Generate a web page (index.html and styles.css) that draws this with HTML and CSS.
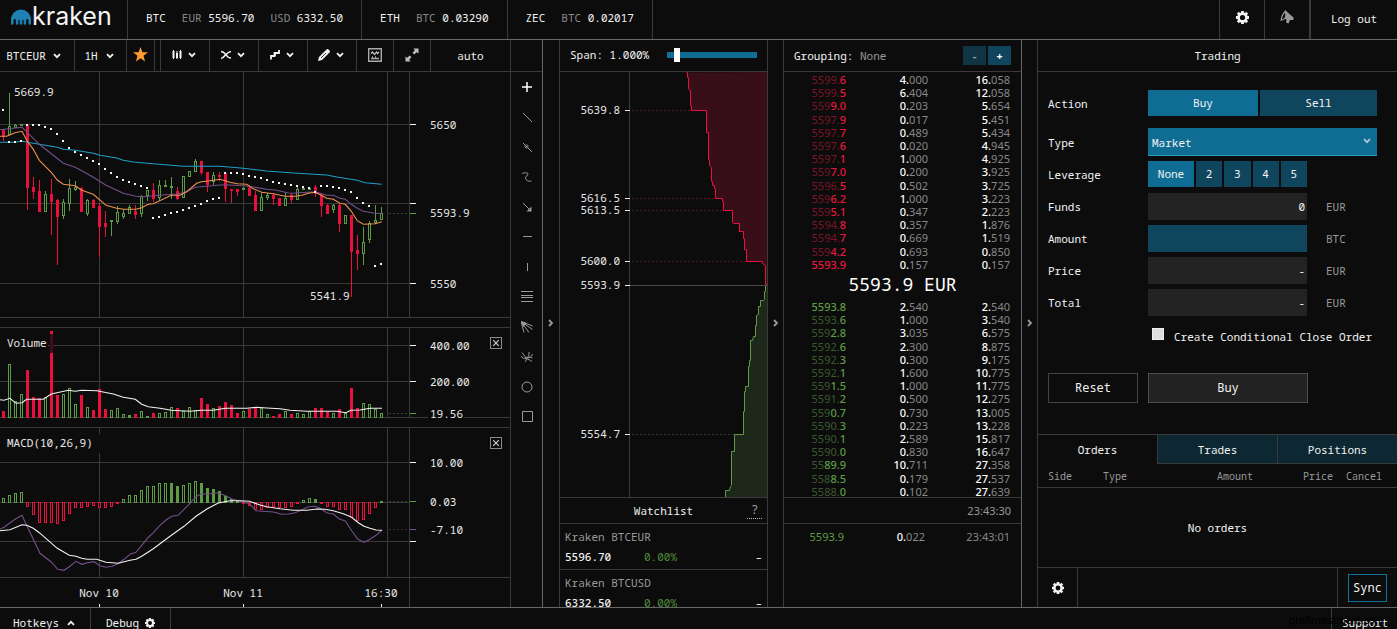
FILE: index.html
```
<!DOCTYPE html>
<html lang="en">
<head>
<meta charset="utf-8">
<title>Kraken Trading</title>
<link rel="stylesheet" href="styles.css">
</head>
<body>
<svg class="defs" aria-hidden="true">
  <symbol id="chev" viewBox="0 0 8 6"><path d="M1 1.2L4 4.2L7 1.2" fill="none" stroke="currentColor" stroke-width="1.8"/></symbol>
  <symbol id="gear" viewBox="0 0 12 12"><circle cx="6" cy="6" r="3.6" fill="none" stroke="currentColor" stroke-width="2.4"/><path d="M6 0v2M6 10v2M0 6h2M10 6h2M1.7 1.7l1.5 1.5M8.8 8.8l1.5 1.5M1.7 10.3l1.5-1.5M8.8 3.2l1.5-1.5" stroke="currentColor" stroke-width="2.6"/></symbol>
</svg>

<header class="topbar">
  <a class="logo" href="#" aria-label="kraken">
    <svg width="20" height="16" viewBox="0 0 20 16"><path d="M0 10.500A10 10 0 0 1 20 10.500V14.500a1.300 1.300 0 0 1-2.600 0V11a1.100 1.100 0 0 0-2.200 0v3.500a1.300 1.300 0 0 1-2.600 0V11a1 1 0 0 0-1.300 0v3.500a1.300 1.300 0 0 1-2.600 0V11a1 1 0 0 0-1.300 0v3.500a1.300 1.300 0 0 1-2.600 0V11a1.100 1.100 0 0 0-2.200 0v3.500a1.300 1.300 0 0 1-2.600 0z" fill="#1f80b4"/></svg>
    <span class="logo-word">kraken</span>
  </a>
  <div class="ticker"><b>BTC</b><span><i>EUR</i> 5596.70</span><span><i>USD</i> 6332.50</span></div>
  <div class="ticker"><b>ETH</b><span><i>BTC</i> 0.03290</span></div>
  <div class="ticker"><b>ZEC</b><span><i>BTC</i> 0.02017</span></div>
  <div class="grow"></div>
  <button class="top-btn" aria-label="Settings"><svg width="13" height="13"><use href="#gear"/></svg></button>
  <button class="top-btn dim" aria-label="Announcements"><svg width="14" height="14" viewBox="0 0 14 14"><path d="M5.500 0.500L13.500 7.500V10H10L8.500 13.500 6 12.500 6.500 9.500 5 9z" fill="currentColor"/><path d="M5.300 1.200C3 3.500 1.500 7 1.200 10.200 3.500 10 5.800 8 6 5z" fill="#0c0c0c" stroke="currentColor" stroke-width="1.300"/></svg></button>
  <a class="logout" href="#">Log out</a>
</header>

<main class="main">
  <section class="chart-col">
    <div class="bar toolbar">
      <button class="tb w-pair">BTCEUR <svg class="chev"><use href="#chev"/></svg></button>
      <button class="tb w-int">1H <svg class="chev"><use href="#chev"/></svg></button>
      <button class="tb w-star" aria-label="Favourite"><svg width="15" height="15" viewBox="0 0 15 15"><path d="M7.500 0l1.900 5.300H15l-4.500 3.500L12.100 14.500 7.500 11.200 2.900 14.500 4.500 8.800 0 5.300h5.600z" fill="#ff9d2e"/></svg></button>
      <div class="tb-gap"></div>
      <button class="tb w-tool" aria-label="Chart type"><svg width="10" height="10" viewBox="0 0 10 10"><path d="M1.500 0v9M5 1v8M8.500 0v9" stroke="currentColor" stroke-width="1"/><path d="M.5 1h2v7h-2zM4 3h2v5h-2zM7.500 1h2v7h-2z" fill="currentColor"/></svg><svg class="chev"><use href="#chev"/></svg></button>
      <button class="tb w-tool" aria-label="Overlays"><svg width="10" height="10" viewBox="0 0 10 10"><path d="M0 1.500C5 1.500 4.500 8 10 8M0 8.500C4 7.500 5 2 10 1.500" fill="none" stroke="currentColor" stroke-width="1.600"/></svg><svg class="chev"><use href="#chev"/></svg></button>
      <button class="tb w-tool" aria-label="Indicators"><svg width="10" height="10" viewBox="0 0 10 10"><path d="M1 9.500V6H4.500V3H9V0M5 6V3" fill="none" stroke="currentColor" stroke-width="1.800"/></svg><svg class="chev"><use href="#chev"/></svg></button>
      <button class="tb w-tool" aria-label="Draw"><svg width="12" height="12" viewBox="0 0 12 12"><path d="M0 12l1-4L8.500.5a1.400 1.400 0 0 1 2 0l1 1a1.400 1.400 0 0 1 0 2L4 11z" fill="currentColor"/><path d="M3 9l5-5" stroke="#0c0c0c" stroke-width=".8"/></svg><svg class="chev"><use href="#chev"/></svg></button>
      <button class="tb w-icon" aria-label="Snapshot"><svg width="14" height="14" viewBox="0 0 14 14"><path d="M.7.700h12.600v12.600H.7z" fill="none" stroke="#aaa" stroke-width="1.400"/><path d="M3 5.500l1.500-1.500 2 2.500 2-2.500 1 1.500 1.500-1.500" fill="none" stroke="#ccc" stroke-width="1.200"/><path d="M3 10.500h8M4 9h1M7 9h1" stroke="#aaa" stroke-width="1.300"/></svg></button>
      <button class="tb w-icon" aria-label="Fullscreen"><svg width="14" height="14" viewBox="0 0 14 14"><path d="M8.500 0.500H13.500v5L11.600 4.200 9.300 6.500 7.500 4.700l2.300-2.300zM5.500 13.500H.5V8.500l1.700 1.200L4.700 7.500 6.500 9.300 4.200 11.600z" fill="#bbb"/></svg></button>
      <button class="tb w-auto">auto</button>
    </div>
    <div class="chart-wrap">
      <svg id="chart" viewBox="0 72 510 535" preserveAspectRatio="xMinYMin meet" role="img" aria-label="BTCEUR price, volume and MACD"></svg>
      <button class="close close-vol" aria-label="Close Volume"><svg width="6" height="6" viewBox="0 0 6 6"><path d="M0 0l6 6M6 0L0 6" stroke="#ccc" stroke-width="1.200"/></svg></button>
      <button class="close close-macd" aria-label="Close MACD"><svg width="6" height="6" viewBox="0 0 6 6"><path d="M0 0l6 6M6 0L0 6" stroke="#ccc" stroke-width="1.200"/></svg></button>
    </div>
  </section>

  <aside class="tools-col">
    <div class="bar"></div>
    <div class="tools">
      <button class="on" aria-label="Crosshair"><svg viewBox="0 0 12 12"><path d="M6 1v10M1 6h10" stroke-width="1.500"/></svg></button>
      <button aria-label="Line"><svg viewBox="0 0 12 12"><path d="M2 2l9 9"/></svg></button>
      <button aria-label="Extended line"><svg viewBox="0 0 12 12"><path d="M2 2l9 9"/><circle cx="5.500" cy="5.500" r="1.500"/></svg></button>
      <button aria-label="Polyline"><svg viewBox="0 0 12 12"><path d="M1 2.500c2-1 6-1 6 .5S4 5.500 4.500 7.500 8 11 10.500 10"/></svg></button>
      <button aria-label="Arrow"><svg viewBox="0 0 12 12"><path d="M2 2l8 8"/><path d="M10.500 5.500v5h-5z" fill="#999" stroke="none"/></svg></button>
      <button aria-label="Horizontal line"><svg viewBox="0 0 12 12"><path d="M2 5.500h9"/></svg></button>
      <button aria-label="Vertical line"><svg viewBox="0 0 12 12"><path d="M6.500 2v8"/></svg></button>
      <button aria-label="Fibonacci levels"><svg viewBox="0 0 12 12"><path d="M0 .5h12M0 4.500h12M0 6.500h12M0 10.500h12"/></svg></button>
      <button aria-label="Fan"><svg viewBox="0 0 12 12"><path d="M0 .5l11.500 4.500M0 .5l11.500 8M0 .5l8 11M0 .5l3 11"/><path d="M0 0l6 2-4 4z" fill="#999" stroke="none"/></svg></button>
      <button aria-label="Arcs"><svg viewBox="0 0 12 12"><path d="M1 1.500l4 5.500M0 5c1 2 3 3 5 2 3-1 3-3 3-6M4 11c1-1 1.500-2.500 1-4M5 7c3 0 6-1 6.500-4M5 7c2-1 4-1 6.500 0M5 8c2 0 4 1 6 2.500"/></svg></button>
      <button aria-label="Circle"><svg viewBox="0 0 12 12"><circle cx="6" cy="6" r="5"/></svg></button>
      <button aria-label="Rectangle"><svg viewBox="0 0 12 12"><path d="M1.500.5h10v10h-10z"/></svg></button>
    </div>
  </aside>

  <button class="fold" aria-label="Collapse chart"><svg width="6" height="8" viewBox="0 0 6 8"><path d="M1 1l3 3-3 3" fill="none" stroke="#999" stroke-width="1.800"/></svg></button>

  <section class="depth-col">
    <div class="bar span-bar">
      <label for="span">Span: 1.000%</label>
      <input id="span" type="range" min="0" max="100" value="8">
    </div>
    <svg id="depth" viewBox="560 72 207 425" preserveAspectRatio="xMaxYMin meet" role="img" aria-label="Market depth"></svg>
    <div class="watch">
      <div class="watch-head"><h2>Watchlist</h2><abbr title="Watchlist help">?</abbr></div>
      <div class="watch-item"><p>Kraken BTCEUR</p><div class="watch-vals"><b>5596.70</b><em>0.00%</em><span>–</span></div></div>
      <div class="watch-item"><p>Kraken BTCUSD</p><div class="watch-vals"><b>6332.50</b><em>0.00%</em><span>–</span></div></div>
    </div>
  </section>

  <button class="fold" aria-label="Collapse depth"><svg width="6" height="8" viewBox="0 0 6 8"><path d="M1 1l3 3-3 3" fill="none" stroke="#999" stroke-width="1.800"/></svg></button>

  <section class="book-col">
    <div class="bar book-bar"><span>Grouping: <i>None</i></span><div class="grow"></div><button class="step off" aria-label="Less">-</button><button class="step" aria-label="More">+</button></div>
    <div class="book">
      <table class="asks"><tbody id="asks"></tbody></table>
      <div class="last">5593.9 EUR</div>
      <table class="bids"><tbody id="bids"></tbody></table>
    </div>
    <div class="clock">23:43:30</div>
    <table class="trades"><tbody><tr><td class="up">5593.9</td><td><b>0.</b>022</td><td>23:43:01</td></tr></tbody></table>
  </section>

  <button class="fold" aria-label="Collapse book"><svg width="6" height="8" viewBox="0 0 6 8"><path d="M1 1l3 3-3 3" fill="none" stroke="#999" stroke-width="1.800"/></svg></button>

  <section class="trade-col">
    <div class="bar title-bar"><h2>Trading</h2></div>
    <form class="form" onsubmit="return false">
      <div class="row row-action"><span class="lbl">Action</span><div class="seg"><button type="button" class="sel buy">Buy</button><button type="button" class="sell">Sell</button></div></div>
      <div class="row row-type"><label class="lbl" for="type">Type</label><div class="pick"><select id="type"><option>Market</option></select><svg class="chev"><use href="#chev"/></svg></div></div>
      <div class="row"><span class="lbl">Leverage</span><div class="lev"><button type="button" class="sel">None</button><button type="button">2</button><button type="button">3</button><button type="button">4</button><button type="button">5</button></div></div>
      <div class="row"><label class="lbl" for="funds">Funds</label><input class="field" id="funds" value="0"><span class="unit">EUR</span></div>
      <div class="row"><label class="lbl" for="amount">Amount</label><input class="field live" id="amount"><span class="unit">BTC</span></div>
      <div class="row"><label class="lbl" for="price">Price</label><input class="field" id="price" value="-"><span class="unit">EUR</span></div>
      <div class="row"><label class="lbl" for="total">Total</label><input class="field" id="total" value="-"><span class="unit">EUR</span></div>
      <div class="cond"><input type="checkbox" id="cond"><label for="cond">Create Conditional Close Order</label></div>
      <div class="actions"><button type="reset" class="reset">Reset</button><button class="submit">Buy</button></div>
    </form>
    <nav class="tabs"><button class="cur">Orders</button><button>Trades</button><button>Positions</button></nav>
    <table class="orders"><thead><tr><th class="c1">Side</th><th>Type</th><th class="r c3">Amount</th><th class="r c4">Price</th><th class="r c5">Cancel</th></tr></thead></table>
    <p class="empty">No orders</p>
    <div class="panel-foot"><button class="pf-gear" aria-label="Order settings"><svg width="12" height="12"><use href="#gear"/></svg></button><div class="grow"></div><div class="pf-sync"><button class="sync">Sync</button></div></div>
  </section>
</main>

<footer class="footer">
  <button class="f-hot">Hotkeys <svg class="chev flip"><use href="#chev"/></svg></button>
  <button class="f-debug">Debug <svg width="10" height="10"><use href="#gear"/></svg></button>
  <div class="grow"></div>
  <a class="f-support" href="#">Support</a>
  <span class="mark">profinvestment.com</span>
</footer>
<script src="app.js"></script>
</body>
</html>
```
FILE: styles.css
```
* { box-sizing: border-box; }
html, body { height: 100%; }
body { margin: 0; background: #0c0c0c; color: #f2f2f2; font: 11px/16px "Noto Sans Mono", "DejaVu Sans Mono", monospace; display: flex; flex-direction: column; overflow: hidden; }
button, input, select { font: inherit; color: inherit; background: none; border: 0; border-radius: 0; padding: 0; margin: 0; }
button { cursor: pointer; }
a { color: inherit; text-decoration: none; }
b { font-weight: 400; }
i, em { font-style: normal; }
h2 { margin: 0; font: inherit; }
p { margin: 0; }
svg { flex: none; display: block; }
.defs { position: absolute; width: 0; height: 0; }
.grow { flex: 1; }
.chev { width: 8px; height: 6px; }
.flip { transform: rotate(180deg); }

.topbar { flex: none; display: flex; height: 40px; border-bottom: 1px solid #666; }
.logo { display: flex; align-items: flex-start; gap: 1px; width: 128px; padding: 9px 0 0 11px; border-right: 1px solid #3a3a3a; }
.logo-word { font: 25px/26px "Inter", "Liberation Sans", sans-serif; margin-top: -6px; color: #f4f4f4; }
.ticker { display: flex; gap: 16px; padding: 10px 18px 0; border-right: 1px solid #3a3a3a; white-space: pre; }
.ticker i { color: #888; }
.top-btn { width: 45px; padding-bottom: 5px; border-left: 1px solid #3a3a3a; display: flex; align-items: center; justify-content: center; }
.dim { color: #999; }
.logout { width: 88px; padding-top: 11px; text-align: center; border-left: 2px solid #3a3a3a; }

.main { flex: 1; min-height: 0; display: grid; grid-template-columns: minmax(0, 511fr) 32px 17px 208px 16px 238px 16px minmax(330px, 359fr); }
.bar { flex: none; height: 32px; display: flex; align-items: center; border-bottom: 1px solid #3a3a3a; }
.chart-col, .depth-col, .book-col, .trade-col, .tools-col { display: flex; flex-direction: column; min-width: 0; min-height: 0; overflow: hidden; border-right: 1px solid #3a3a3a; }
.trade-col { border-right: 0; }
.tools-col, .book-col { border-right-color: #666; }
.fold { border-right: 1px solid #3a3a3a; padding-bottom: 1px; display: flex; align-items: center; justify-content: center; }

.toolbar { align-items: stretch; }
.tb { flex: none; border-right: 1px solid #3a3a3a; display: flex; align-items: center; justify-content: center; gap: 7px; }
.w-pair { width: 75px; padding-right: 7px; }
.w-int { width: 52px; gap: 8px; padding-right: 3px; }
.w-star { width: 28px; padding-bottom: 2px; }
.tb-gap { width: 6px; border-right: 1px solid #3a3a3a; }
.w-tool { width: 49px; padding: 0 3px 2px 0; gap: 6px; }
.w-icon { width: 37px; padding-bottom: 1px; }
.w-auto { flex: 1; border-right: 0; }
.chart-wrap { flex: 1; min-height: 0; position: relative; }
#chart { width: 100%; height: 100%; }
#chart text, #depth text { font-size: 11px; fill: #e8e8e8; }
.close { position: absolute; right: 8px; width: 12px; height: 12px; border: 1px solid #8a8a8a; display: flex; align-items: center; justify-content: center; }
.close-vol { top: 265px; }
.close-macd { top: 365px; }

.tools { display: flex; flex-direction: column; }
.tools button { height: 30px; display: flex; align-items: center; justify-content: center; }
.tools svg { width: 12px; height: 12px; fill: none; stroke: #999; stroke-width: 1; }
.tools .on svg { stroke: #fff; }

.span-bar { padding: 0 10px 2px; justify-content: space-between; }
#span { appearance: none; width: 90px; height: 14px; }
#span::-webkit-slider-runnable-track { height: 6px; background: #0f6d94; }
#span::-webkit-slider-thumb { appearance: none; width: 6px; height: 14px; margin-top: -4px; background: #fff; }
#depth { width: 100%; }
.watch { flex: 1; min-height: 0; border-top: 1px solid #3a3a3a; }
.watch-head { position: relative; height: 26px; padding-top: 5px; text-align: center; border-bottom: 1px solid #3a3a3a; }
.watch-head abbr { position: absolute; right: 5px; top: 4px; width: 15px; height: 17px; color: #999; text-decoration: none; border-bottom: 1px dotted #bbb; font-size: 12px; }
.watch-item { height: 46px; padding: 5px 5px 0; border-bottom: 1px solid #3a3a3a; }
.watch-item p { color: #999; }
.watch-vals { display: grid; grid-template-columns: 79px 1fr auto; margin-top: 4px; }
.watch-vals b { font-weight: 500; }
.watch-vals em { color: #4f8a3a; }

.book-bar { padding: 0 10px 0 10px; gap: 2px; }
.book-bar i { color: #999; }
.step { width: 23px; height: 19px; background: #0f465e; color: #fff; font-weight: 700; }
.step.off { background: #0f3444; color: #999; }
.book, .trades, .clock { font-family: "Noto Sans", sans-serif; }
.book { height: 425px; flex: none; overflow: hidden; padding-top: 1px; }
table { border-collapse: collapse; }
.book table, .trades { width: 100%; table-layout: fixed; color: #888; }
.book table { height: 198px; line-height: 13px; }
.book td, .trades td { padding: 0; text-align: right; }
.book td:nth-child(1) { width: 62px; }
.book td:nth-child(2) { width: 82px; }
.book td:nth-child(3), .trades td:nth-child(3) { padding-right: 11px; }
.book b, .trades b { color: #fff; font-weight: 500; }
.asks td:first-child { color: #7a1428; }
.asks td:first-child b { color: #e8183c; }
.bids td:first-child { color: #3b5a2c; }
.bids td:first-child b, .up { color: #5c9c45; }
.last { height: 29px; text-align: center; font: 18px/26px "Noto Sans Mono", monospace; color: #fff; }
.clock { flex: none; height: 27px; padding: 5px 10px 0 0; text-align: right; color: #999; border-top: 1px solid #3a3a3a; border-bottom: 1px solid #3a3a3a; }
.trades { margin-top: 5px; color: #888; }
.trades td:nth-child(1) { width: 60px; }
.trades td:nth-child(2) { width: 81px; }

.title-bar { justify-content: center; }
.form { flex: none; padding: 18px 20px 31px 10px; }
.row { display: flex; height: 32px; }
.row-action { height: 38px; }
.row-type { height: 33px; }
.lbl { flex: none; width: 100px; line-height: 28px; }
.row-type .lbl { line-height: 30px; }
.seg { flex: 1; display: flex; gap: 2px; height: 26px; }
.seg button, .lev button { background: #0f465e; }
.seg .buy { width: 110px; }
.seg .sell { flex: 1; }
.seg .sel, .lev .sel { background: #0f6d94; }
.pick { flex: 1; position: relative; height: 28px; }
.pick select { appearance: none; width: 100%; height: 28px; padding: 2px 4px 0; background: #0f6d94; border-bottom: 1px solid #1f9cc4; }
.pick .chev { position: absolute; right: 6px; top: 10px; color: #a9c8d6; }
.lev { display: flex; gap: 2px; height: 26px; width: 159px; }
.lev button { flex: 1; }
.lev .sel { flex: none; width: 46px; }
.field { width: 159px; height: 27px; padding: 0 2px; background: #232323; text-align: right; }
.field.live { background: #0f465e; }
.unit { margin-left: 19px; line-height: 28px; color: #999; }
.cond { display: flex; align-items: center; gap: 10px; height: 32px; padding-left: 104px; }
.cond input { appearance: none; width: 12px; height: 12px; background: #ddd; border: 1px solid #eee; margin-bottom: 6px; }
.actions { display: flex; gap: 10px; margin-top: 20px; font-size: 12px; }
.reset { width: 90px; height: 30px; border: 1px solid #444; }
.submit { width: 160px; height: 30px; border: 1px solid #4d4d4d; background: #222; }
.tabs { flex: none; display: flex; border-top: 1px solid #3a3a3a; }
.tabs button { flex: 1; height: 29px; padding-top: 1px; background: #0d2832; border-left: 1px solid #3a3a3a; border-bottom: 1px solid #3a3a3a; }
.tabs .cur { background: none; border-color: transparent; border-left: 0; }
.orders { flex: none; width: 100%; table-layout: fixed; border-bottom: 1px solid #3a3a3a; font-size: 10px; color: #999; }
.orders th { height: 23px; padding: 2px 0 0; font-weight: 400; text-align: left; }
.orders .r { text-align: right; }
.orders .c1 { width: 65px; padding-left: 10px; }
.orders .c3 { width: 90px; }
.orders .c4 { width: 80px; }
.orders .c5 { width: 64px; padding-right: 15px; }
.empty { flex: 1; padding-top: 32px; text-align: center; }
.panel-foot { flex: none; display: flex; height: 40px; border-top: 1px solid #3a3a3a; }
.pf-gear { width: 40px; border-right: 1px solid #3a3a3a; display: flex; align-items: center; justify-content: center; }
.pf-sync { width: 60px; padding: 6px 10px 0; border-left: 1px solid #3a3a3a; }
.sync { width: 39px; height: 28px; border: 1px solid #12719a; font-size: 12px; }

.footer { flex: none; position: relative; display: flex; height: 22px; overflow: hidden; border-top: 1px solid #666; }
.footer button, .f-support { flex: none; height: 30px; border-right: 1px solid #3a3a3a; display: flex; align-items: center; }
.f-hot { width: 91px; padding-left: 13px; gap: 8px; }
.footer .f-hot, .footer .f-debug, .footer .f-support { height: 29px; }
.footer .f-debug { width: 80px; padding-left: 15px; gap: 6px; }
.footer .f-support { width: 66px; padding-left: 10px; border-right: 0; border-left: 1px solid #3a3a3a; }
.mark { position: absolute; right: 13px; top: 4px; font-family: "Noto Sans", sans-serif; font-size: 10px; color: #000; }
```
FILE: app.js
```
const NS = 'http://www.w3.org/2000/svg';
const RED = '#e8103c', GREEN = '#5c9c45', GRID = '#3a3a3a', BG = '#0c0c0c';

function add(svg, tag, attrs, text) {
  const el = document.createElementNS(NS, tag);
  for (const k in attrs) el.setAttribute(k, attrs[k]);
  if (text !== undefined) el.textContent = text;
  svg.appendChild(el);
  return el;
}
const box = (svg, x, y, w, h, fill) => add(svg, 'rect', { x, y, width: w, height: h, fill, 'shape-rendering': 'crispEdges' });
const dashes = (svg, x1, x2, y, color) => add(svg, 'path', { d: `M${x1} ${y + 0.5}H${x2}`, stroke: color, 'stroke-dasharray': '2 2', 'shape-rendering': 'crispEdges' });
const label = (svg, x, y, text, anchor) => add(svg, 'text', { x, y: y + 4, 'text-anchor': anchor || 'start' }, text);
const curve = (svg, pts, top, color) => add(svg, 'polyline', {
  points: pts.trim().split(/\s+/).map(p => { const [x, y] = p.split(','); return `${(x / 3).toFixed(1)},${(top + y / 3).toFixed(1)}`; }).join(' '),
  fill: 'none', stroke: color, 'stroke-width': 1.1
});

const chart = document.getElementById('chart');

/* grid lines */
for (const x of [99, 243, 387]) { box(chart, x, 72, 1, 245, GRID); box(chart, x, 328, 1, 89, GRID); box(chart, x, 428, 1, 149, GRID); }
box(chart, 409, 72, 1, 245, GRID); box(chart, 409, 328, 1, 89, GRID); box(chart, 409, 428, 1, 179, GRID);
for (const y of [317, 327, 417, 427, 577]) box(chart, 0, y, 510, 1, GRID);
for (const y of [124, 203, 283, 345, 381, 462, 502, 541]) {
  box(chart, 0, y, 409, 1, GRID);
  if (y !== 502) box(chart, 410, y, 6, 1, '#f2f2f2');
}
box(chart, 0, 335, 48, 16, BG);
box(chart, 0, 434, 100, 19, BG);

/* trend, high, body top, body bottom, low */
const candles = `R176,179,197,212 G68,169,193,195 G163,165,170,174 G162,162,164,164 R163,165,352,420 R322,352,364,386 R330,364,422,422
G362,373,422,422 R328,373,392,494 R388,391,437,584 G386,397,434,448 G328,355,398,424 G334,350,356,362 R350,353,424,424 G388,391,428,437
R388,391,410,412 R400,409,467,562 R424,460,467,502 G451,451,452,499 G407,427,452,462 G418,430,437,446 G406,412,430,433 R404,424,431,446
G376,379,430,442 G360,361,374,392 R340,361,383,396 G330,346,382,392 G330,346,347,347 G322,349,350,388 R350,364,383,391 G319,319,382,383
G304,304,319,322 G268,274,304,307 R273,274,307,316 R307,307,341,367 G307,316,334,346 R307,316,317,332 R308,310,355,395 R356,358,359,398
R356,358,362,379 G350,355,356,358 R352,355,376,379 R362,376,419,422 G368,382,421,422 G370,376,382,391 R370,374,383,404 R383,383,404,404
G370,383,404,404 R370,374,386,398 G350,358,386,386 G350,355,358,358 G351,353,356,358 R346,352,368,380 R370,374,406,442 R403,406,430,430
G401,406,416,430 R401,406,458,487 G434,436,458,463 R436,436,542,680 R494,541,548,601 G472,517,548,586 G454,458,508,520 G404,449,455,458
G412,430,446,446`.trim().split(/\s+/);
candles.forEach((c, i) => {
  const color = c[0] === 'R' ? RED : GREEN;
  const [hi, top, bot, lo] = c.slice(1).split(',').map(v => Math.round(70 + v / 3));
  const x = 3 + 6 * i;
  box(chart, x, hi, 1, Math.max(1, lo - hi), color);
  box(chart, x - 1, top, 3, Math.max(1, bot - top + 1), color);
  if (c[0] === 'G' && bot - top > 1) box(chart, x, top + 1, 1, bot - top - 1, BG);
});

curve(chart, `0,217 40,217 68,214 82,217 118,223 172,232 190,238 226,241 280,250 300,256 350,264 370,271 400,276 460,281 550,289 660,289
730,295 800,303 870,308 930,312 980,315 1010,321 1072,331 1095,338 1145,343`, 70, '#1e9fc8');
curve(chart, `0,179 66,172 82,187 118,223 190,280 226,292 245,302 280,322 318,346 370,370 408,379 430,380 496,374 530,372 550,368 568,361
586,352 620,349 658,345 690,345 736,348 760,351 800,358 830,361 865,369 880,370 930,366 950,367 980,376 1000,376 1020,385 1036,388 1054,403
1072,415 1090,424 1120,429 1145,431`, 70, '#74508a');
curve(chart, `0,199 20,199 45,188 66,184 82,214 100,238 118,271 154,307 172,330 190,343 226,347 245,361 280,373 318,406 350,415 372,418 408,418
425,413 445,403 460,401 514,376 540,376 560,365 590,340 604,335 630,332 660,328 690,337 712,341 740,343 760,356 785,367 820,371 855,379
885,379 905,376 925,370 945,367 964,376 980,385 1000,388 1020,400 1036,403 1054,424 1072,452 1090,463 1125,461 1145,455`, 70, '#f0914e');

[120, 215, 216, 212, 165, 165, 165, 171, 177, 192, 213, 234, 246, 255, 264, 273, 282, 297, 309, 321, 330, 336, 342, 348, 354, 444, 441, 435,
  429, 426, 420, 414, 408, 402, 393, 387, 384, 309, 309, 309, 312, 318, 321, 324, 330, 336, 339, 342, 345, 348, 351, 354, 365, 348, 348, 351,
  354, 360, 366, 384, 399, 408, 588, 582].forEach((v, i) => box(chart, 2 + 6 * i, Math.round(69.4 + v / 3), 2, 2, '#f4f4f4'));

/* volume */
`R304 G163 G274 G253 R181 R262 R265 G262 R64 R256 G253 G235 G283 R256 G292 R301 R238 R298 G301 G295 G313 G316 R313 G304 G319 R310 G310 G307
G292 R295 G304 G292 G301 R265 R283 G295 R289 R277 R286 R310 G304 R298 R295 G295 G313 R319 R313 G304 R313 G310 G313 G304 R295 R295 R307 G310
R298 G310 R235 R295 G280 G283 G298 G310`.split(/\s+/).forEach((v, i) => {
  const y = Math.round(310 + v.slice(1) / 3), x = 2 + 6 * i, red = v[0] === 'R';
  box(chart, x, y, 3, 418 - y, red ? RED : GREEN);
  if (!red && y < 415) box(chart, x + 1, y + 1, 1, 416 - y, BG);
});
box(chart, 50, 334, 3, 19, '#3f0d18');
curve(chart, `0,269 12,271 30,265 48,280 66,278 80,268 130,268 154,252 205,241 226,244 245,241 290,242 340,252 370,262 406,268 425,283 445,290
480,295 514,301 570,304 604,301 640,301 676,295 740,295 770,292 800,294 840,296 870,301 920,304 1010,304 1038,308 1052,301 1080,300
1110,295 1146,295`, 310, '#f2f2f2');

/* MACD histogram, f marks a filled bar */
`565 556 550 547 587 611 635 635 635 638 629 608 590 592 587 584 590 592 587 579 568 556 556 541 529 529 520 520 520f 529f 526 520 514 520f
535f 538f 544f 559f 568f 574f 580 584 597 597 592 588 592 590 587 579 571 565 568f 579 587 587 597 597 620 629 626 608 590 574f`
  .split(/\s+/).forEach((v, i) => {
    const y = Math.round(310 + parseInt(v) / 3), x = 2 + 6 * i, up = y < 502;
    const top = up ? y : 502, h = up ? 503 - y : y - 501;
    box(chart, x, top, 3, h, up ? GREEN : RED);
    if (!v.endsWith('f') && h > 2) box(chart, x + 1, top + 1, 1, h - 2, BG);
  });
curve(chart, `0,658 12,652 45,628 66,616 82,650 100,688 120,730 154,756 173,778 192,781 208,770 228,754 246,763 262,758 282,755 300,767 318,772
336,769 354,761 372,748 390,733 408,727 425,706 443,684 460,668 480,646 498,630 515,619 534,616 552,598 570,580 588,560 604,551 622,553
655,548 680,559 695,567 720,573 748,581 768,602 820,606 845,613 865,612 885,608 905,600 925,590 945,589 960,595 982,609 1000,612 1018,627
1036,633 1055,662 1073,687 1092,697 1110,688 1128,676 1146,660`, 310, '#74508a');
curve(chart, `0,662 30,659 66,644 80,646 100,655 118,668 172,715 208,736 228,739 245,745 262,748 290,748 318,757 355,760 390,751 408,748
425,739 460,716 515,675 552,649 588,619 622,596 655,579 690,572 720,572 748,574 780,585 800,590 840,596 880,601 920,601 950,597 975,598
1000,602 1030,611 1055,622 1075,638 1092,649 1110,655 1128,660 1146,661`, 310, '#f2f2f2');

/* last-value markers */
for (const [y, dash, tick] of [[213, '#2f4a26', GREEN], [413, '#2f4a26', GREEN], [501, '#2f4a26', GREEN], [529, '#3d2c48', '#74508a']]) {
  dashes(chart, 389, 409, y, dash);
  box(chart, 410, y, 6, 1, tick);
}
box(chart, 428, 408, 36, 11, BG);
[['5650', 124], ['5593.9', 212], ['5550', 283], ['400.00', 345], ['200.00', 381], ['19.56', 413], ['10.00', 462], ['0.03', 501], ['-7.10', 529]]
  .forEach(([t, y]) => label(chart, 430, y + 1, t));
label(chart, 14, 92, '5669.9');
label(chart, 310, 296, '5541.9');
label(chart, 7, 343, 'Volume');
label(chart, 7, 443, 'MACD(10,26,9)');
for (const [x, t] of [[99, 'Nov 10'], [243, 'Nov 11'], [381, '16:30']]) {
  label(chart, x, 593, t, 'middle');
  box(chart, x, 604, 1, 3, '#f2f2f2');
}

/* market depth */
const depth = document.getElementById('depth');
const asks = `558,6 562,6 562,22 566,22 566,55 569,62 572,62 572,106 575,106 575,121 619,121 619,187 626,187 626,268 629,268 629,286 634,292
634,334 637,334 637,346 643,346 643,355 646,355 646,385 668,385 668,395 670,395 670,421 697,421 697,458 700,460 718,460 718,485 730,485
730,505 734,505 734,538 740,538 740,574 788,574 788,580 796,586 796,643 802,643`;
const bids = `797,647 797,664 793,664 793,688 790,691 782,691 782,709 775,709 775,733 769,737 769,766 766,766 766,798 760,800 757,810 751,811
751,870 748,872 748,889 745,889 745,949 736,949 736,964 733,964 733,1024 730,1024 730,1093 703,1093 703,1144 695,1144 695,1245 690,1250
688,1260 676,1260 676,1282 660,1282`;
const steps = s => s.trim().split(/\s+/).map(p => { const [x, y] = p.split(','); return `${Math.floor(500 + x / 3) + 0.5},${Math.floor(70 + y / 3) + 0.5}`; }).join(' ');
add(depth, 'polygon', { points: steps(asks) + ' 767,72', fill: '#380e18' });
add(depth, 'polygon', { points: '767,285 ' + steps(bids) + ' 767,497', fill: '#1e281a' });
add(depth, 'polyline', { points: steps(asks), fill: 'none', stroke: RED });
add(depth, 'polyline', { points: steps(bids), fill: 'none', stroke: GREEN });
box(depth, 629, 72, 1, 425, GRID);
box(depth, 630, 285, 137, 1, '#4a4a4a');
for (const [t, y, x, c] of [['5639.8', 110, 691, '#4a1420'], ['5616.5', 198, 715, '#4a1420'], ['5613.5', 210, 723, '#4a1420'], ['5600.0', 261, 746, '#4a1420'], ['5593.9', 285, 0, ''], ['5554.7', 434, 734, '#2a3d22']]) {
  label(depth, 620, y, t, 'end');
  box(depth, 625, y, 5, 1, '#f2f2f2');
  if (x) dashes(depth, 632, x, y, c);
}

/* order book: "|" splits the faint and bright digits of the price */
function fill(id, rows) {
  document.getElementById(id).innerHTML = rows.trim().split('\n').map(line => {
    const [p, a, t] = line.trim().split(/\s+/);
    const [dim, lit] = p.split('|');
    const num = v => { const [w, f] = v.split('.'); return `<b>${w}.</b>${f}`; };
    return `<tr><td>${dim}<b>${lit}</b></td><td>${num(a)}</td><td>${num(t)}</td></tr>`;
  }).join('');
}
fill('asks', `5599.|6 4.000 16.058
5599.|5 6.404 12.058
559|9.0 0.203 5.654
5597.|9 0.017 5.451
5597.|7 0.489 5.434
5597.|6 0.020 4.945
5597.|1 1.000 4.925
559|7.0 0.200 3.925
5596.|5 0.502 3.725
559|6.2 1.000 3.223
559|5.1 0.347 2.223
5594.|8 0.357 1.876
5594.|7 0.669 1.519
559|4.2 0.693 0.850
|5593.9 0.157 0.157`);
fill('bids', `|5593.8 2.540 2.540
5593.|6 1.000 3.540
559|2.8 3.035 6.575
5592.|6 2.300 8.875
5592.|3 0.300 9.175
5592.|1 1.600 10.775
559|1.5 1.000 11.775
5591.|2 0.500 12.275
559|0.7 0.730 13.005
5590.|3 0.223 13.228
5590.|1 2.589 15.817
5590.|0 0.830 16.647
55|89.9 10.711 27.358
558|8.5 0.179 27.537
5588.|0 0.102 27.639`);
```
